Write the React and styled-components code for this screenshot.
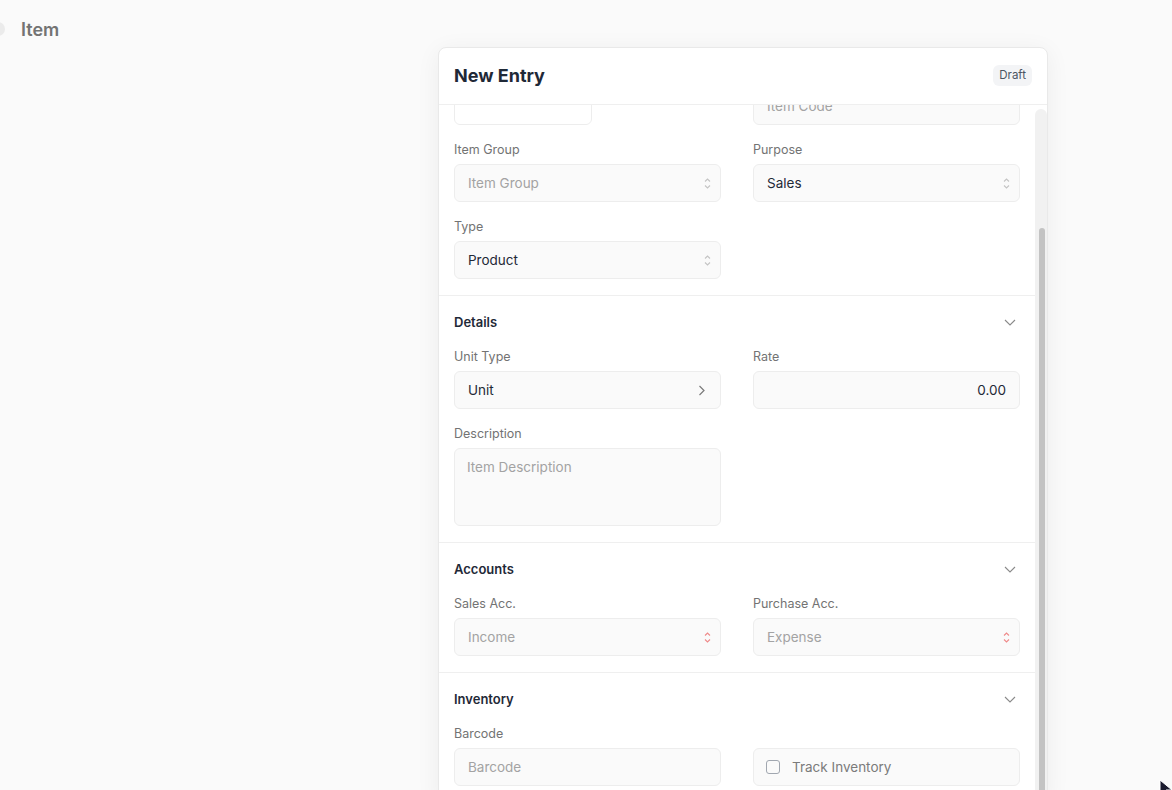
import React, { useLayoutEffect, useRef } from "react";
import styled, { createGlobalStyle } from "styled-components";

const GlobalStyle = createGlobalStyle`
  html, body {
    margin: 0;
    height: 100%;
    overflow: hidden;
    background: #fafafa;
    font-family: Inter, "Noto Sans", sans-serif;
  }
  * { box-sizing: border-box; }
`;

const Page = styled.div`
  height: 100vh;
  padding-top: 18px;
`;

const TopBar = styled.div`
  display: flex;
  align-items: center;
  gap: 16px;
  height: 22px;
`;

const Dot = styled.span`
  width: 14px;
  height: 14px;
  margin-left: -9px;
  border-radius: 50%;
  background: #ebebeb;
`;

const PageTitle = styled.h1`
  margin: 0;
  font-size: 18px;
  font-weight: 600;
  color: #737373;
`;

const Card = styled.div`
  width: 610px;
  margin: 7px 0 0 438px;
  background: #fff;
  border: 1px solid #e9e9e9;
  border-radius: 8px;
  box-shadow: 0 4px 24px rgba(0, 0, 0, 0.06);
  overflow: hidden;
  display: flex;
  flex-direction: column;
`;

const CardHeader = styled.div`
  height: 57px;
  padding: 0 15px 2px;
  display: flex;
  align-items: center;
  justify-content: space-between;
  border-bottom: 1px solid #efefef;
`;

const CardTitle = styled.h2`
  margin: 0;
  font-size: 18px;
  font-weight: 700;
  color: #1f2937;
`;

const Badge = styled.span`
  padding: 3px 6px;
  border-radius: 6px;
  background: #f3f4f6;
  font-size: 11.5px;
  line-height: 15px;
  color: #4b5563;
`;

const Body = styled.div`
  height: 697px;
  display: flex;
`;

const Viewport = styled.div`
  flex: 1;
  overflow: hidden;
`;

const Track = styled.div`
  width: 12px;
  margin-top: 4px;
  display: flex;
  flex-direction: column;
  background: #f1f1f1;
  border-radius: 6px 6px 0 0;
`;

const Thumb = styled.div`
  flex: 1;
  width: 6px;
  margin: 119px 0 0 4px;
  background: #c3c3c3;
  border-radius: 3px 3px 0 0;
`;

const Section = styled.section`
  padding: 16px 15px;
  border-top: ${(p) => (p.$first ? "none" : "1px solid #efefef")};
`;

const SectionHead = styled.div`
  height: 20px;
  margin-bottom: 16px;
  display: flex;
  align-items: center;
  justify-content: space-between;
  font-size: 13px;
  font-weight: 600;
  color: #1f2937;
`;

const Grid = styled.div`
  display: grid;
  grid-template-columns: 1fr 1fr;
  column-gap: 32px;
  row-gap: 16px;
`;

const Field = styled.div`
  display: flex;
  flex-direction: column;
  align-items: flex-start;
`;

const Label = styled.label`
  margin-bottom: 5px;
  font-size: 12.5px;
  line-height: 18px;
  color: #737373;
`;

const Control = styled.div`
  width: ${(p) => p.$width || "100%"};
  height: ${(p) => (p.$tall ? "78px" : "38px")};
  padding: ${(p) => (p.$tall ? "9px 12px" : p.$right ? "0 13px" : "0 9px 0 13px")};
  display: flex;
  align-items: ${(p) => (p.$tall ? "flex-start" : "center")};
  justify-content: ${(p) => (p.$right ? "flex-end" : "space-between")};
  gap: 12px;
  border: 1px solid #ededed;
  border-radius: 6px;
  background: ${(p) => (p.$white ? "#fff" : "#fafafa")};
  font-size: 13.5px;
  line-height: 18px;
  color: ${(p) => (p.$muted ? "#a3a3a3" : "#1f2937")};
`;

const CheckRow = styled.span`
  display: flex;
  align-items: center;
  gap: 12px;
  margin-left: -1px;
  color: #7b7b7b;
`;

const Box = styled.span`
  width: 14px;
  height: 14px;
  border: 1.5px solid #a1a7b0;
  border-radius: 3px;
`;

const Pointer = styled.svg`
  position: fixed;
  left: 1159px;
  top: 779px;
`;

const SelectIcon = ({ color = "#c4c4c4" }) => (
  <svg width="7" height="13" viewBox="0 0 7 13" fill="none">
    <path d="M1 4.5 3.5 2 6 4.5" stroke={color} strokeWidth="1.1" />
    <path d="M1 8.5 3.5 11 6 8.5" stroke={color} strokeWidth="1.1" />
  </svg>
);

const ChevronRight = () => (
  <svg width="7" height="11" viewBox="0 0 7 11" fill="none" style={{ marginRight: 6 }}>
    <path d="M1.5 1 6 5.5 1.5 10" stroke="#7a7a7a" strokeWidth="1.2" />
  </svg>
);

const ChevronDown = () => (
  <svg width="12" height="7" viewBox="0 0 12 7" fill="none" style={{ marginRight: 4 }}>
    <path d="M1 1 6 6 11 1" stroke="#8a8a8a" strokeWidth="1.1" />
  </svg>
);

const TextField = ({ label, value, placeholder, ...rest }) => (
  <Field>
    <Label>{label}</Label>
    <Control $muted={!value} {...rest}>
      {value || placeholder}
    </Control>
  </Field>
);

const SelectField = ({ label, value, placeholder, iconColor }) => (
  <Field>
    <Label>{label}</Label>
    <Control $muted={!value}>
      {value || placeholder}
      <SelectIcon color={iconColor} />
    </Control>
  </Field>
);

const Group = ({ title, children }) => (
  <Section>
    <SectionHead>
      {title}
      <ChevronDown />
    </SectionHead>
    <Grid>{children}</Grid>
  </Section>
);

export default function App() {
  const viewRef = useRef(null);

  // the form is shown scrolled to its end
  useLayoutEffect(() => {
    const el = viewRef.current;
    if (el) el.scrollTop = el.scrollHeight;
  }, []);

  return (
    <Page>
      <GlobalStyle />
      <TopBar>
        <Dot />
        <PageTitle>Item</PageTitle>
      </TopBar>

      <Card>
        <CardHeader>
          <CardTitle>New Entry</CardTitle>
          <Badge>Draft</Badge>
        </CardHeader>

        <Body>
          <Viewport ref={viewRef}>
            <Section $first>
              <Grid>
                <Control $white $width="138px" />
                <Control $muted>Item Code</Control>
                <SelectField label="Item Group" placeholder="Item Group" />
                <SelectField label="Purpose" value="Sales" />
                <SelectField label="Type" value="Product" />
              </Grid>
            </Section>

            <Group title="Details">
              <Field>
                <Label>Unit Type</Label>
                <Control>
                  Unit
                  <ChevronRight />
                </Control>
              </Field>
              <TextField label="Rate" value="0.00" $right />
              <TextField label="Description" placeholder="Item Description" $tall />
            </Group>

            <Group title="Accounts">
              <SelectField label="Sales Acc." placeholder="Income" iconColor="#ef8a8a" />
              <SelectField label="Purchase Acc." placeholder="Expense" iconColor="#ef8a8a" />
            </Group>

            <Group title="Inventory">
              <TextField label="Barcode" placeholder="Barcode" />
              <Field>
                <Label>&nbsp;</Label>
                <Control>
                  <CheckRow>
                    <Box />
                    Track Inventory
                  </CheckRow>
                </Control>
              </Field>
            </Group>
          </Viewport>
          <Track>
            <Thumb />
          </Track>
        </Body>
      </Card>

      <Pointer width="14" height="20" viewBox="0 0 14 20">
        <path d="M1 1v15l4-4 3 7 2-1-3-7h6z" fill="#1a1a2e" stroke="#fff" strokeWidth="1" />
      </Pointer>
    </Page>
  );
}
